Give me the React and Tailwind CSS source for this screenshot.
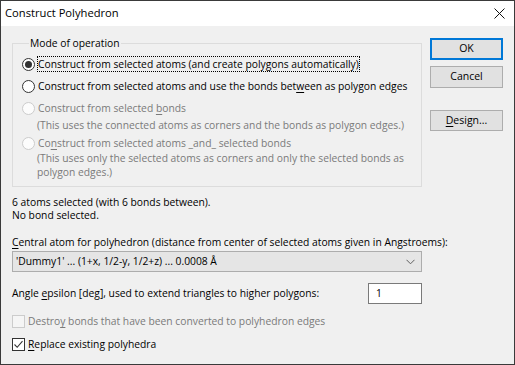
import React from 'react';

const FONT = "font-['Open_Sans',Arial,sans-serif] text-[10.3px]";

function U({ children }) {
  return <span className="underline underline-offset-[2px]">{children}</span>;
}

function Radio({ checked, disabled, focus, children }) {
  return (
    <div className="flex items-center h-[16px]">
      <span className={`w-[13px] h-[13px] rounded-full border flex items-center justify-center shrink-0 ${disabled ? 'border-[#cccccc] bg-[#fcfcfc]' : 'border-[#333333] bg-white'}`}>
        {checked && <span className="w-[7px] h-[7px] rounded-full bg-[#333333]" />}
      </span>
      <span className={`ml-[2px] leading-[14px] whitespace-nowrap ${focus ? 'border border-dotted border-black' : 'border border-transparent'} ${disabled ? 'text-[#7a7a7a]' : 'text-black'}`}>
        {children}
      </span>
    </div>
  );
}

function Check({ checked, disabled, children }) {
  return (
    <div className="flex items-center h-[14px]">
      <span className={`w-[13px] h-[13px] border flex items-center justify-center shrink-0 ${disabled ? 'border-[#cccccc] bg-[#f5f5f5]' : 'border-[#333333] bg-white'}`}>
        {checked && (
          <svg width="11" height="11" viewBox="0 0 11 11">
            <path d="M1.5 5.5 L4.2 8.3 L9.5 2.2" fill="none" stroke="#333" strokeWidth="1.1" />
          </svg>
        )}
      </span>
      <span className={`ml-[3px] leading-[14px] whitespace-nowrap ${disabled ? 'text-[#7a7a7a]' : 'text-black'}`}>{children}</span>
    </div>
  );
}

function Btn({ primary, className = '', children }) {
  return (
    <div className={`w-[73px] flex items-center justify-center bg-[#e1e1e1] text-black text-[10.5px] ${primary ? 'border-2 border-[#0078d7]' : 'border border-[#adadad]'} ${className}`}>
      {children}
    </div>
  );
}

export default function App() {
  return (
    <div className={`w-[515px] h-[365px] flex flex-col border border-[#3a3a3a] ${FONT}`}>
      <div className="h-[25px] shrink-0 bg-white flex items-center justify-between pl-[4px] pr-[9px]">
        <span className="text-[11.2px] text-black">Construct Polyhedron</span>
        <svg width="11" height="11" viewBox="0 0 11 11">
          <path d="M0.5 0.5 L10.5 10.5 M10.5 0.5 L0.5 10.5" stroke="#111" strokeWidth="1" />
        </svg>
      </div>

      <div className="flex-1 bg-[#f0f0f0] flex pl-[11px] gap-[8px]">
        <div className="w-[410px] flex flex-col pt-[10px]">
          <fieldset className="border border-[#dcdcdc] pl-[9px] pb-[7px]">
            <legend className="ml-[7px] px-[1px] leading-[14px] text-black">Mode of operation</legend>
            <div className="mt-[6px]">
              <Radio checked focus>Construct from selected atoms (and create polygons automatically)</Radio>
            </div>
            <div className="mt-[6px]">
              <Radio>Construct from selected atoms and use the bonds bet<U>w</U>een as polygon edges</Radio>
            </div>
            <div className="mt-[6px]">
              <Radio disabled>Construct from selected <U>b</U>onds</Radio>
            </div>
            <div className="mt-[2px] ml-[15px] leading-[14px] whitespace-nowrap text-[#7a7a7a]">
              (This uses the connected atoms as corners and the bonds as polygon edges.)
            </div>
            <div className="mt-[3px]">
              <Radio disabled>Co<U>n</U>struct from selected atoms _and_ selected bonds</Radio>
            </div>
            <div className="ml-[15px] leading-[14px] whitespace-nowrap text-[#7a7a7a]">
              (This uses only the selected atoms as corners and only the selected bonds as<br />polygon edges.)
            </div>
          </fieldset>

          <div className="mt-[9px] leading-[13px] text-black">
            6 atoms selected (with 6 bonds between).<br />No bond selected.
          </div>

          <div className="mt-[13px] leading-[14px] whitespace-nowrap text-black">
            <U>C</U>entral atom for polyhedron (distance from center of selected atoms given in Angstroems):
          </div>
          <div className="mt-[2px] h-[21px] border border-[#adadad] bg-[#e5e5e5] flex items-center justify-between pl-[3px] pr-[6px] text-black">
            <span>'Dummy1' ... (1+x, 1/2-y, 1/2+z) ... 0.0008 Å</span>
            <svg width="9" height="6" viewBox="0 0 9 6">
              <path d="M0.5 0.8 L4.5 4.8 L8.5 0.8" fill="none" stroke="#606060" strokeWidth="1" />
            </svg>
          </div>

          <div className="mt-[11px] flex items-center justify-between">
            <span className="text-black">Angle <U>e</U>psilon [deg], used to extend triangles to higher polygons:</span>
            <div className="w-[54px] h-[21px] border border-[#7a7a7a] bg-white flex items-center pl-[7px] text-black">1</div>
          </div>

          <div className="mt-[10px]">
            <Check disabled>Destro<U>y</U> bonds that have been converted to polyhedron edges</Check>
          </div>
          <div className="mt-[9px]">
            <Check checked><U>R</U>eplace existing polyhedra</Check>
          </div>
        </div>

        <div className="w-[73px] flex flex-col pt-[12px]">
          <Btn primary className="h-[22px]">OK</Btn>
          <Btn className="h-[22px] mt-[6px]">Cancel</Btn>
          <Btn className="h-[21px] mt-[22px]"><U>D</U>esign...</Btn>
        </div>
      </div>
    </div>
  );
}
